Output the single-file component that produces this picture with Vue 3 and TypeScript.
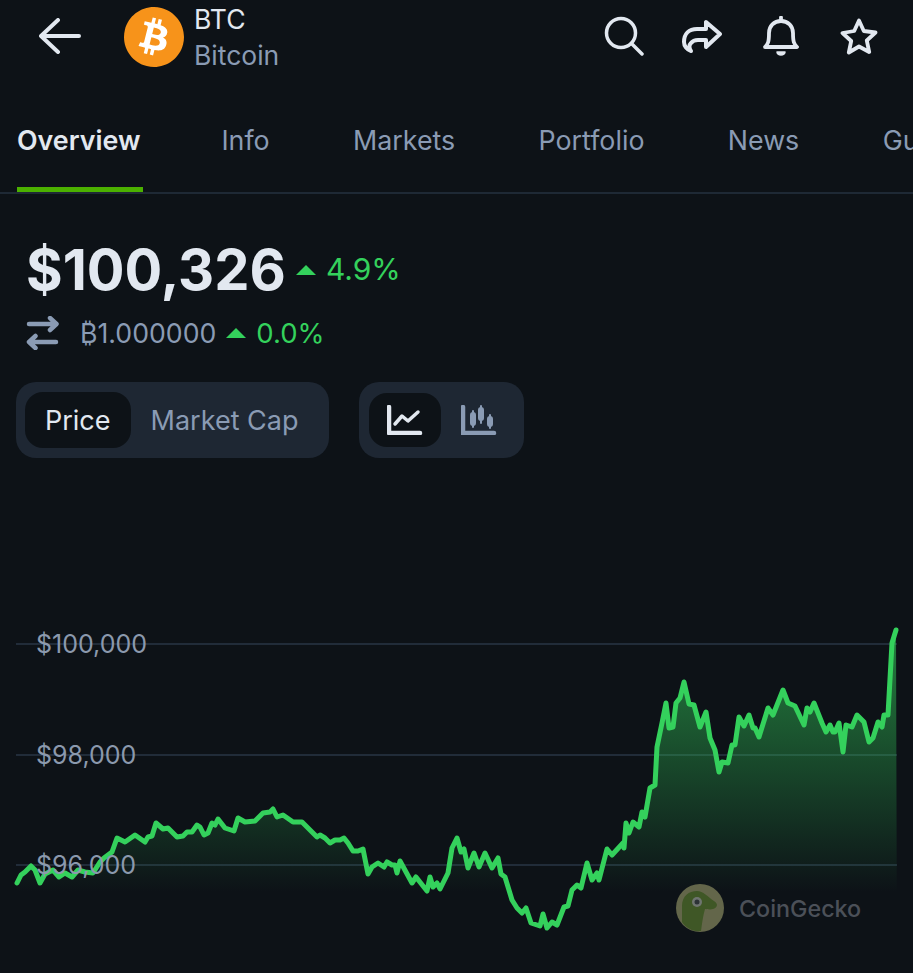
<script setup lang="ts">
import { computed } from "vue";

const tabs = ["Overview", "Info", "Markets", "Portfolio", "News", "Guides"];

const gridLines = [
  { y: 644, label: "$100,000" },
  { y: 755, label: "$98,000" },
  { y: 865, label: "$96,000" },
];

// top of the chart block on the page, the svg below uses page y values
const chartTop = 458;

const points: [number, number][] = [
  [17,883],[21,875],[25,872],[31,866],[35,870],[40,883],[45,874],[53,870],[59,877],[65,873],[72,877],[78,870],[85,872],[93,873],[100,862],[104,858],[112,852],[117,838],[125,842],[135,835],[145,842],[148,837],[152,836],[156,823],[163,829],[168,828],[177,837],[183,836],[187,832],[192,832],[197,825],[200,827],[204,835],[208,833],[212,823],[215,825],[218,819],[225,828],[234,831],[238,818],[245,822],[255,821],[263,813],[270,812],[273,809],[277,817],[283,815],[293,822],[302,822],[310,830],[317,837],[320,835],[325,838],[330,843],[335,840],[340,840],
  [344,838],[348,843],[353,851],[358,851],[363,849],[368,874],[372,867],[378,863],[384,867],[387,862],[392,865],[395,865],[397,873],[400,861],[412,883],[416,877],[427,891],[430,877],[433,887],[437,883],[440,889],[448,873],[452,848],[457,838],[461,852],[464,849],[468,868],[474,853],[479,867],[485,853],[492,868],[498,858],[501,874],[505,877],[512,900],[517,908],[522,913],[526,908],[531,923],[540,926],[543,914],[547,928],[552,922],[557,925],[564,907],[568,906],[572,890],[577,885],[581,888],[587,863],[592,880],[597,873],[599,880],[607,849],[612,855],[623,843],[624,848],[626,823],[629,833],[633,822],[639,827],[642,812],[645,817],[650,788],[655,785],
  [657,747],[662,723],[666,703],[669,728],[673,727],[676,703],[680,698],[684,682],[689,704],[694,705],[700,727],[706,712],[710,738],[715,750],[719,772],[722,762],[728,763],[732,745],[735,745],[739,717],[744,726],[749,715],[753,728],[755,728],[759,737],[768,708],[773,715],[783,690],[788,703],[795,706],[804,725],[807,708],[810,712],[814,703],[822,723],[826,732],[830,725],[833,732],[835,732],[839,723],[843,752],[846,725],[852,727],[857,715],[864,722],[869,742],[873,738],[878,722],[882,727],[884,715],[888,715],[892,643],[896,630],
];

const linePoints = computed(() => points.map((p) => p.join(",")).join(" "));
const areaPoints = computed(() => `17,973 ${linePoints.value} 897,973`);
</script>

<template>
  <div class="screen">
    <header class="top">
      <svg class="back" width="42" height="36" viewBox="0 0 42 36" fill="none">
        <path d="M19 2 2 18l17 16M3 18h37" stroke="#e2e8f0" stroke-width="4" stroke-linecap="round" stroke-linejoin="round" />
      </svg>
      <svg class="logo" width="60" height="60" viewBox="0 0 24 24">
        <circle cx="12" cy="12" r="11" fill="#fff" />
        <path fill="#f7931a" d="M23.638 14.904c-1.602 6.43-8.113 10.34-14.542 8.736C2.67 22.05-1.244 15.525.362 9.105 1.962 2.67 8.475-1.243 14.9.358c6.43 1.605 10.342 8.115 8.738 14.548v-.002zm-6.35-4.613c.24-1.59-.974-2.45-2.64-3.03l.54-2.153-1.315-.33-.525 2.107c-.345-.087-.705-.167-1.064-.25l.526-2.127-1.32-.33-.54 2.165c-.285-.067-.565-.132-.84-.2l-1.815-.45-.35 1.407s.975.225.955.236c.535.136.63.486.615.766l-1.477 5.92c-.075.166-.24.406-.614.314.015.02-.96-.24-.96-.24l-.66 1.51 1.71.426.93.242-.54 2.19 1.32.327.54-2.17c.36.1.705.19 1.05.273l-.51 2.154 1.32.33.545-2.19c2.24.427 3.93.257 4.64-1.774.57-1.637-.03-2.58-1.217-3.196.854-.193 1.5-.76 1.68-1.93h.01zm-3.01 4.22c-.404 1.64-3.157.75-4.05.53l.72-2.9c.896.23 3.757.67 3.33 2.37zm.41-4.24c-.37 1.49-2.662.735-3.405.55l.654-2.64c.744.18 3.137.524 2.75 2.084v.006z" />
      </svg>
      <div class="coin">
        <span class="symbol">BTC</span>
        <span class="coin-name">Bitcoin</span>
      </div>
      <div class="actions">
        <svg class="search" width="40" height="40" viewBox="0 0 40 40" fill="none" stroke="#e2e8f0" stroke-width="3.5" stroke-linecap="round">
          <circle cx="17" cy="17" r="14.500" />
          <path d="M28 28l10 10" />
        </svg>
        <svg width="40" height="36" viewBox="0 0 40 36" fill="none" stroke="#e2e8f0" stroke-width="4" stroke-linejoin="round" stroke-linecap="round">
          <path d="M38 16 24 4v7h-9C7 11 2 16 2 24c0 4 3 8 7 9-2-3-2-6 0-8 1.500-2 4-3 7-3h8v7z" />
        </svg>
        <svg width="36" height="40" viewBox="0 0 36 40" fill="none" stroke="#e2e8f0" stroke-width="3.8" stroke-linejoin="round" stroke-linecap="round">
          <path d="M2 31c3-3 4-5 4-14 0-7 5-12 12-12s12 5 12 12c0 9 1 11 4 14z" />
          <path d="M18 1.500v3" />
          <path d="M14 36h8a4 3 0 0 1-8 0z" fill="#e2e8f0" stroke-width="1.500" />
        </svg>
        <svg width="38" height="38" viewBox="0 0 38 38" fill="none" stroke="#e2e8f0" stroke-width="3.8" stroke-linejoin="round">
          <path d="M19 3.500l4.800 10.500 11.700 1.500-8.700 8 2.400 11.500L19 29.500 8.800 35.500l2.400-11.500-8.700-8L14.200 14z" />
        </svg>
      </div>
    </header>

    <nav class="tabs">
      <span v-for="(tab, i) in tabs" :key="tab" class="tab" :class="{ active: i === 0 }">{{ tab }}</span>
    </nav>

    <section class="price-block">
      <div class="price-row">
        <span class="price">$100,326</span>
        <i class="caret"></i>
        <span class="change">4.9%</span>
      </div>
      <div class="btc-row">
        <svg width="33" height="34" viewBox="0 0 33 34" fill="none" stroke="#8a9bb4" stroke-width="4.5" stroke-linecap="round" stroke-linejoin="round">
          <path d="M3 8h27M24 2l6.500 6-6.500 6" />
          <path d="M30 26H3M9.500 20 3 26l6.500 6" />
        </svg>
        <span class="btc-value">₿1.000000</span>
        <i class="caret"></i>
        <span class="change small">0.0%</span>
      </div>
    </section>

    <section class="toggles">
      <div class="toggle">
        <span class="pill on">Price</span>
        <span class="pill">Market Cap</span>
      </div>
      <div class="toggle icons">
        <span class="pill on">
          <svg width="36" height="30" viewBox="0 0 36 30" fill="none" stroke="#e2e8f0" stroke-linecap="round" stroke-linejoin="round">
            <path d="M2 2v26h31" stroke-width="4.500" />
            <path d="M8 19l7-8 6 5 10-9" stroke-width="3.500" />
          </svg>
        </span>
        <span class="pill">
          <svg width="36" height="30" viewBox="0 0 36 30" fill="none" stroke="#8a9bb4" stroke-linecap="round">
            <path d="M2 2v26h31" stroke-width="4.500" />
            <path d="M12 6v16M20 1v17M29 10v13" stroke-width="2" />
            <path d="M12 10v8M20 5v8M29 14v5" stroke-width="6" />
          </svg>
        </span>
      </div>
    </section>

    <section class="chart">
      <svg class="plot" width="913" height="515" :viewBox="`0 ${chartTop} 913 515`">
        <defs>
          <linearGradient id="area" gradientUnits="userSpaceOnUse" x1="0" y1="630" x2="0" y2="892">
            <stop offset="0" stop-color="#34d15c" stop-opacity="0.58" />
            <stop offset="1" stop-color="#34d15c" stop-opacity="0" />
          </linearGradient>
        </defs>
        <line v-for="g in gridLines" :key="g.y" x1="16" x2="897" :y1="g.y" :y2="g.y" stroke="#212c39" stroke-width="2" />
        <polygon :points="areaPoints" fill="url(#area)" />
        <polyline :points="linePoints" fill="none" stroke="#34d15c" stroke-width="5" stroke-linejoin="round" stroke-linecap="round" />
      </svg>
      <span v-for="g in gridLines" :key="g.label" class="axis-label" :style="{ top: `${g.y - chartTop - 15}px` }">{{ g.label }}</span>
      <div class="watermark">
        <svg width="48" height="48" viewBox="0 0 48 48">
          <circle cx="24" cy="24" r="24" fill="#63664a" />
          <path d="M6 38V22C6 12 13 7 21 7c6 0 11 6 17 10 5 3 3 7-1 8-3 1-6 0-8 0-2 7-3 14-4 22-8 1-15-3-19-9z" fill="#3f5726" />
          <circle cx="21" cy="18" r="5" fill="#6f7570" />
          <circle cx="21" cy="18" r="2.500" fill="#2c3236" />
        </svg>
        <span>CoinGecko</span>
      </div>
    </section>
  </div>
</template>

<style scoped>
.screen {
  width: 913px;
  height: 973px;
  overflow: hidden;
  display: flex;
  flex-direction: column;
  background-color: #0d1217;
  font-family: Inter, "Liberation Sans", sans-serif;
  color: #e2e8f0;
}

.top {
  height: 100px;
  padding: 7px 35px 0 39px;
  box-sizing: border-box;
  display: flex;
  align-items: flex-start;
  flex-shrink: 0;
}

.back {
  margin-top: 11px;
  margin-right: 43px;
}

.logo {
  flex-shrink: 0;
}

.coin {
  margin-left: 10px;
  margin-top: -6px;
  display: flex;
  flex-direction: column;
  font-size: 26.5px;
  line-height: 36px;
}

.coin-name {
  color: #8a9bb4;
}

.actions {
  margin-left: auto;
  margin-top: 9px;
  display: flex;
  align-items: center;
  gap: 41px;
}

.search {
  margin-right: -3px;
}

.tabs {
  height: 94px;
  padding-left: 17px;
  box-sizing: border-box;
  display: flex;
  gap: 83.4px;
  white-space: nowrap;
  overflow: hidden;
  flex-shrink: 0;
  border-bottom: 2px solid #1e2935;
  font-size: 26.8px;
}

.tab {
  height: 92px;
  line-height: 80px;
  color: #8a9bb4;
  flex-shrink: 0;
}

.tab.active {
  padding-right: 3px;
  margin-right: -5.4px;
  font-weight: 600;
  color: #e2e8f0;
  border-bottom: 5px solid #4bb000;
  box-sizing: border-box;
}

.price-block {
  padding: 42px 0 0 26px;
  flex-shrink: 0;
}

.price-row,
.btc-row {
  display: flex;
  align-items: center;
}

.price-row {
  height: 68px;
}

.price {
  font-size: 56px;
  font-weight: 700;
}

.caret {
  width: 0;
  height: 0;
  margin: 0 10px 0 10px;
  border-left: 10px solid transparent;
  border-right: 10px solid transparent;
  border-bottom: 10px solid #34d15c;
}

.change {
  margin-top: -2px;
  font-size: 30px;
  color: #34d15c;
}

.change.small {
  margin-top: 0;
  font-size: 27.5px;
}

.btc-row {
  height: 44px;
  margin-top: 7px;
}

.btc-value {
  margin-left: 21px;
  font-size: 26.7px;
  color: #8a9bb4;
}

.toggles {
  padding: 27px 0 0 16px;
  display: flex;
  gap: 30px;
  flex-shrink: 0;
}

.toggle {
  height: 76px;
  padding: 10px 11px 10px 9px;
  box-sizing: border-box;
  display: flex;
  align-items: stretch;
  border-radius: 20px;
  background-color: #1e2733;
  font-size: 27px;
}

.toggle.icons {
  padding: 11px 10px;
}

.pill {
  padding: 0 20px;
  display: flex;
  align-items: center;
  border-radius: 18px;
  color: #8a9bb4;
}

.pill.on {
  background-color: #0d1217;
  color: #e2e8f0;
}

.icons .pill {
  padding: 0 18px;
}

.icons .pill + .pill {
  padding: 0 17px 0 20px;
}

.chart {
  position: relative;
  flex: 1;
}

.plot {
  display: block;
}

.axis-label {
  position: absolute;
  left: 36px;
  font-size: 25px;
  line-height: 30px;
  color: #8b99ad;
}

.watermark {
  position: absolute;
  left: 676px;
  top: 426px;
  display: flex;
  align-items: center;
  gap: 15px;
  font-size: 23.3px;
  font-weight: 500;
  color: #4b5058;
}
</style>
